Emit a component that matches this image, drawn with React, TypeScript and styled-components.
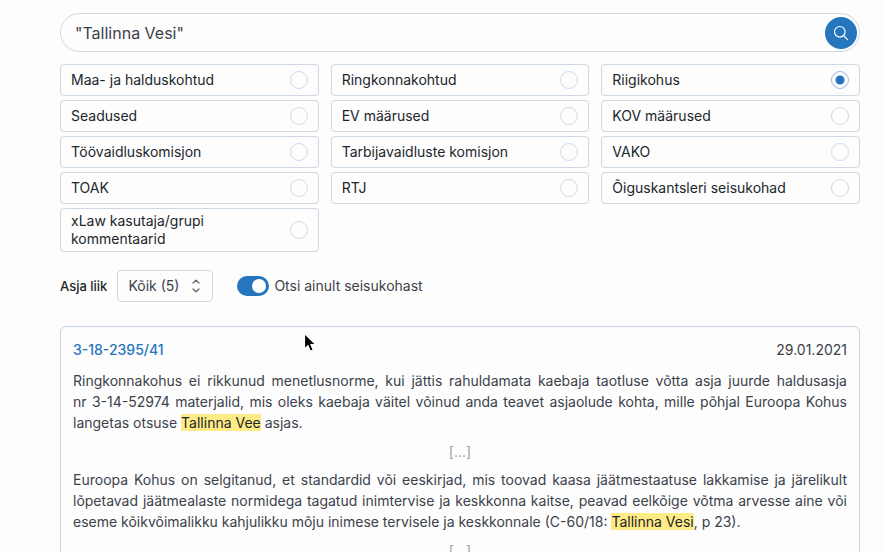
import React, { useState } from "react";
import styled, { createGlobalStyle } from "styled-components";

const GlobalStyle = createGlobalStyle`
  *, *::before, *::after { box-sizing: border-box; }
  body {
    margin: 0;
    background: #fdfdfd;
    color: #3b424b;
    font-family: Inter, "Liberation Sans", sans-serif;
    font-size: 14px;
    line-height: 20px;
  }
`;

const Page = styled.main`
  height: 100vh;
  overflow: hidden;
  padding: 13px 23px 0 60px;
`;

const SearchBar = styled.form`
  display: flex;
  align-items: center;
  height: 39px;
  padding: 0 2px 0 14px;
  border: 1px solid #ccd8e3;
  border-radius: 20px;
`;

const SearchInput = styled.input`
  flex: 1;
  min-width: 0;
  padding: 0;
  border: 0;
  outline: 0;
  background: transparent;
  color: #3b424b;
  font: inherit;
  font-size: 16px;
`;

const SearchButton = styled.button`
  display: grid;
  place-items: center;
  width: 32px;
  height: 32px;
  padding: 0;
  border: 0;
  border-radius: 50%;
  background: #2676be;
  color: #fff;
`;

const Options = styled.fieldset`
  display: grid;
  grid-template-columns: repeat(3, 1fr);
  gap: 4px 12px;
  margin: 12px 0 0;
  padding: 0;
  border: 0;
`;

const Option = styled.label`
  display: flex;
  align-items: center;
  justify-content: space-between;
  min-height: 32px;
  padding: 3px 10px;
  border: 1px solid #ccd8e3;
  border-radius: 4px;
  color: #22262b;
  line-height: 18px;
`;

const OptionText = styled.span`
  max-width: 180px;
`;

const Radio = styled.input`
  appearance: none;
  flex: none;
  width: 18px;
  height: 18px;
  margin: 0;
  border: 1px solid #cfdae6;
  border-radius: 50%;

  &:checked {
    border-color: #8fbdf0;
    background: radial-gradient(circle, #2676be 4px, transparent 5px);
  }
`;

const Filters = styled.div`
  display: flex;
  align-items: center;
  margin-top: 18px;
`;

const FilterLabel = styled.label`
  margin-right: 10px;
  color: #22262b;
  font-size: 13px;
  font-weight: 500;
`;

const SelectBox = styled.div`
  display: grid;
  align-items: center;
  margin-right: 24px;

  > * { grid-area: 1 / 1; }
  > svg { justify-self: end; margin-right: 12px; pointer-events: none; }
`;

const Select = styled.select`
  appearance: none;
  width: 96px;
  height: 32px;
  padding: 0 10px;
  border: 1px solid #ccd8e3;
  border-radius: 4px;
  background: transparent;
  color: #3b424b;
  font: inherit;
`;

const SwitchLabel = styled.label`
  display: flex;
  align-items: center;
  gap: 5px;
`;

const Switch = styled.input`
  appearance: none;
  display: flex;
  width: 32px;
  height: 20px;
  margin: 0;
  padding: 3px;
  border-radius: 10px;
  background: #b8c4d0;

  &::before {
    content: "";
    width: 14px;
    height: 14px;
    border-radius: 50%;
    background: #fff;
  }

  &:checked { justify-content: flex-end; background: #2676be; }
`;

const Result = styled.article`
  margin-top: 24px;
  padding: 12px;
  border: 1px solid #c5d3e1;
  border-radius: 6px;
`;

const ResultHeader = styled.header`
  display: flex;
  justify-content: space-between;
  line-height: 21px;
`;

const CaseLink = styled.a`
  color: #2676be;
  font-weight: 500;
  text-decoration: none;
`;

const Excerpt = styled.p`
  margin: 10px 0 8px;
  line-height: 21px;
  text-align: justify;

  & + div + & { margin-top: 7px; }
`;

const Omission = styled.div`
  color: #9aa1a9;
  line-height: 21px;
  text-align: center;
`;

const Mark = styled.mark`
  background: #ffeb85;
  color: #22262b;
`;

const Pointer = styled.svg`
  position: absolute;
  left: 303px;
  top: 332px;
  pointer-events: none;
`;

const sources = [
  "Maa- ja halduskohtud", "Ringkonnakohtud", "Riigikohus",
  "Seadused", "EV määrused", "KOV määrused",
  "Töövaidluskomisjon", "Tarbijavaidluste komisjon", "VAKO",
  "TOAK", "RTJ", "Õiguskantsleri seisukohad",
  "xLaw kasutaja/grupi kommentaarid",
];

export default function App() {
  const [query, setQuery] = useState('"Tallinna Vesi"');
  const [source, setSource] = useState("Riigikohus");
  const [positionOnly, setPositionOnly] = useState(true);

  return (
    <>
      <GlobalStyle />
      <Page>
        <SearchBar role="search" onSubmit={(e) => e.preventDefault()}>
          <SearchInput aria-label="Otsing" value={query} onChange={(e) => setQuery(e.target.value)} />
          <SearchButton type="submit" aria-label="Otsi">
            <svg width="16" height="16" viewBox="0 0 16 16" fill="none" stroke="currentColor" strokeWidth="1.2" strokeLinecap="round">
              <circle cx="6.8" cy="6.8" r="5.3" />
              <path d="M10.7 10.7 14.6 14.6" />
            </svg>
          </SearchButton>
        </SearchBar>

        <Options aria-label="Allikas">
          {sources.map((name) => (
            <Option key={name}>
              <OptionText>{name}</OptionText>
              <Radio type="radio" name="source" checked={source === name} onChange={() => setSource(name)} />
            </Option>
          ))}
        </Options>

        <Filters>
          <FilterLabel htmlFor="kind">Asja liik</FilterLabel>
          <SelectBox>
            <Select id="kind">
              <option>Kõik (5)</option>
            </Select>
            <svg width="10" height="14" viewBox="0 0 10 14" fill="none" stroke="#59616b" strokeWidth="1.2" strokeLinecap="round" strokeLinejoin="round">
              <path d="M2 4 5 1.2 8 4M2 10 5 12.8 8 10" />
            </svg>
          </SelectBox>
          <SwitchLabel>
            <Switch type="checkbox" role="switch" checked={positionOnly} onChange={(e) => setPositionOnly(e.target.checked)} />
            Otsi ainult seisukohast
          </SwitchLabel>
        </Filters>

        <Result>
          <ResultHeader>
            <CaseLink href="#3-18-2395-41">3-18-2395/41</CaseLink>
            <time dateTime="2021-01-29">29.01.2021</time>
          </ResultHeader>
          <Excerpt>
            Ringkonnakohus ei rikkunud menetlusnorme, kui jättis rahuldamata kaebaja taotluse võtta asja juurde
            haldusasja nr&nbsp;3-14-52974 materjalid, mis oleks kaebaja väitel võinud anda teavet asjaolude kohta, mille
            põhjal Euroopa Kohus langetas otsuse <Mark>Tallinna Vee</Mark> asjas.
          </Excerpt>
          <Omission>[...]</Omission>
          <Excerpt>
            Euroopa Kohus on selgitanud, et standardid või eeskirjad, mis toovad kaasa jäätmestaatuse lakkamise ja
            järelikult lõpetavad jäätmealaste normidega tagatud inimtervise ja keskkonna kaitse, peavad eelkõige
            võtma arvesse aine või eseme kõikvõimalikku kahjulikku mõju inimese tervisele ja keskkonnale
            (C-60/18: <Mark>Tallinna Vesi</Mark>, p 23).
          </Excerpt>
          <Omission>[...]</Omission>
        </Result>
      </Page>
      <Pointer width="14" height="21" viewBox="0 0 14 21" aria-hidden="true">
        <path d="M1.5 1.5V17L5 13.7 7.3 19.2 10.2 18 7.9 12.6H12.8Z" fill="#000" stroke="#fff" strokeWidth="1.2" strokeLinejoin="round" />
      </Pointer>
    </>
  );
}
